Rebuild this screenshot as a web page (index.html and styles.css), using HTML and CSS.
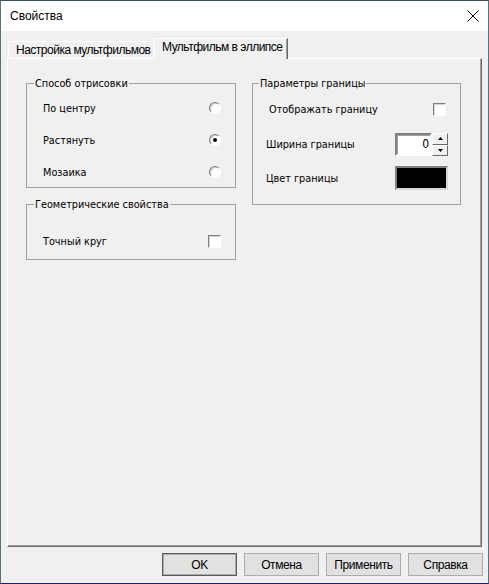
FILE: index.html
```html
<!DOCTYPE html>
<html lang="ru">

<head>
    <meta charset="UTF-8">
    <meta name="viewport" content="width=device-width, initial-scale=1.0">
    <title>Свойства</title>
    <link rel="stylesheet" href="styles.css">
</head>

<body>

    <div class="window">
        <div class="titlebar">
            <span class="title">Свойства</span>
            <svg class="close" width="12" height="12" viewBox="0 0 12 12">
                <path d="M0.5 0.5L11.5 11.5M11.5 0.5L0.5 11.5" stroke="#000" stroke-width="1" fill="none"/>
            </svg>
        </div>

        <div class="content">
            <div class="tabs">
                <div class="tab">Настройка мультфильмов</div>
                <div class="tab active">Мультфильм в эллипсе</div>
            </div>

            <div class="panel">
                <div class="column">
                    <fieldset class="group group-draw">
                        <legend>Способ отрисовки</legend>
                        <div class="row">
                            <span>По центру</span>
                            <span class="radio"></span>
                        </div>
                        <div class="row">
                            <span>Растянуть</span>
                            <span class="radio checked"></span>
                        </div>
                        <div class="row">
                            <span>Мозаика</span>
                            <span class="radio"></span>
                        </div>
                    </fieldset>

                    <fieldset class="group group-geom">
                        <legend>Геометрические свойства</legend>
                        <div class="row">
                            <span>Точный круг</span>
                            <span class="checkbox"></span>
                        </div>
                    </fieldset>
                </div>

                <div class="column">
                    <fieldset class="group group-border">
                        <legend>Параметры границы</legend>
                        <div class="row row-show">
                            <span class="shift">Отображать границу</span>
                            <span class="checkbox"></span>
                        </div>
                        <div class="row row-width">
                            <span>Ширина границы</span>
                            <div class="spin">
                                <div class="spin-value">0</div>
                                <div class="spin-buttons">
                                    <div class="spin-btn">
                                        <svg width="5" height="3" viewBox="0 0 5 3"><polygon points="2.5,0 5,3 0,3" fill="#000"/></svg>
                                    </div>
                                    <div class="spin-btn">
                                        <svg width="5" height="3" viewBox="0 0 5 3"><polygon points="0,0 5,0 2.5,3" fill="#000"/></svg>
                                    </div>
                                </div>
                            </div>
                        </div>
                        <div class="row row-color">
                            <span>Цвет границы</span>
                            <div class="color-box"></div>
                        </div>
                    </fieldset>
                </div>
            </div>

            <div class="buttons">
                <button class="btn default">OK</button>
                <button class="btn">Отмена</button>
                <button class="btn">Применить</button>
                <button class="btn">Справка</button>
            </div>
        </div>
    </div>

</body>

</html>
```

FILE: styles.css
```css
body {
    margin: 0;
    padding: 0;
    font-family: 'DejaVu Sans Condensed', 'Liberation Sans', Arial, sans-serif;
    font-size: 10.8px;
    color: #000;
    background-color: #f0f0f0;
}

.window {
    width: 489px;
    height: 584px;
    box-sizing: border-box;
    border: 1px solid #57717a;
    border-top-color: #3d4f5a;
    border-bottom-color: #1f2260;
    background-color: #f0f0f0;
    display: flex;
    flex-direction: column;
}

.titlebar {
    height: 30px;
    flex-shrink: 0;
    background-color: #ffffff;
    display: flex;
    align-items: center;
    justify-content: space-between;
    padding: 0 9px 0 9px;
}

.title {
    font-family: 'Liberation Sans', Arial, sans-serif;
    font-size: 12px;
}

.content {
    padding: 7px 6px 0 6px;
}

/* tab strip */
.tabs {
    display: flex;
    align-items: flex-end;
    height: 20px;
    padding-left: 1px;
    font-family: 'Liberation Sans', Arial, sans-serif;
    font-size: 12px;
    letter-spacing: -0.5px;
}

.tab {
    box-sizing: border-box;
    height: 17px;
    width: 146px;
    padding: 1px 0 0 7px;
    line-height: 15px;
    border-top: 1px solid #ffffff;
    border-left: 1px solid #ffffff;
    white-space: nowrap;
}

.tab.active {
    position: relative;
    z-index: 1;
    width: 134px;
    height: 21px;
    margin-bottom: -1px;
    padding-top: 1px;
    background-color: #f0f0f0;
    border-right: 1px solid #696969;
    box-shadow: inset -1px 0 0 #a0a0a0;
}

.panel {
    box-sizing: border-box;
    height: 489px;
    border: 1px solid #ffffff;
    border-right-color: #696969;
    border-bottom-color: #696969;
    box-shadow: inset -1px -1px 0 #a0a0a0;
    padding: 18px 0 0 18px;
    display: grid;
    grid-template-columns: 210px 209px;
    column-gap: 16px;
    align-items: start;
}

.column {
    display: flex;
    flex-direction: column;
    gap: 10px;
}

/* group boxes */
.group {
    margin: 0;
    min-width: 0;
    border: 1px solid #a0a0a0;
    display: flex;
    flex-direction: column;
}

.group legend {
    padding: 0 1px;
    line-height: 13px;
}

.group-draw {
    padding: 8px 14px 5px 16px;
    gap: 12px;
}

.group-geom {
    padding: 20px 14px 8px 16px;
}

.group-draw legend,
.group-geom legend {
    margin-left: -9px;
}

.group-border {
    padding: 9px 12px 14px 13px;
}

.group-border legend {
    margin-left: -7px;
}

.row {
    display: flex;
    align-items: center;
    justify-content: space-between;
    height: 20px;
}

.row-show .checkbox {
    margin-right: 2px;
}

.shift {
    padding-left: 3px;
}

.row-width {
    height: 23px;
    margin-top: 14px;
}

.row-color {
    height: 24px;
    margin-top: 10px;
}

/* classic controls */
.radio {
    box-sizing: border-box;
    width: 12px;
    height: 12px;
    border-radius: 50%;
    border: 1px solid;
    border-color: #808080 #ffffff #ffffff #808080;
    background-color: #ffffff;
    box-shadow: inset 1px 1px 0 #c8c8c8;
    display: flex;
    align-items: center;
    justify-content: center;
}

.radio.checked::after {
    content: '';
    width: 4px;
    height: 4px;
    border-radius: 50%;
    background-color: #000;
}

.checkbox {
    box-sizing: border-box;
    width: 13px;
    height: 13px;
    border: 1px solid;
    border-color: #808080 #ffffff #ffffff #808080;
    background-color: #ffffff;
    box-shadow: inset 1px 1px 0 #d4d4d4;
}

.spin {
    display: flex;
    height: 23px;
}

.spin-value {
    box-sizing: border-box;
    width: 37px;
    height: 23px;
    background-color: #ffffff;
    border: 2px solid;
    border-color: #808080 #ffffff #ffffff #808080;
    box-shadow: inset 1px 1px 0 #a0a0a0;
    text-align: right;
    font-size: 12px;
    line-height: 19px;
    padding-right: 1px;
}

.spin-buttons {
    display: flex;
    flex-direction: column;
    width: 16px;
}

.spin-btn {
    box-sizing: border-box;
    height: 11.5px;
    background-color: #f0f0f0;
    border: 1px solid;
    border-color: #ffffff #696969 #696969 #ffffff;
    display: flex;
    align-items: center;
    justify-content: center;
}

.color-box {
    box-sizing: border-box;
    width: 53px;
    height: 24px;
    background-color: #000;
    border: 2px solid;
    border-color: #808080 #d8d8d8 #d8d8d8 #808080;
}

/* dialog buttons */
.buttons {
    display: flex;
    justify-content: flex-end;
    gap: 7px;
    margin-top: 6px;
    margin-right: -1px;
}

.btn {
    box-sizing: border-box;
    width: 75px;
    height: 23px;
    padding: 0;
    font-family: 'Liberation Sans', Arial, sans-serif;
    font-size: 12px;
    letter-spacing: -0.4px;
    color: #000;
    background-color: #e1e1e1;
    border: 1px solid #adadad;
}

.btn.default {
    border-color: #5a5a5a;
    box-shadow: inset 0 0 0 1px #adadad;
}
```
